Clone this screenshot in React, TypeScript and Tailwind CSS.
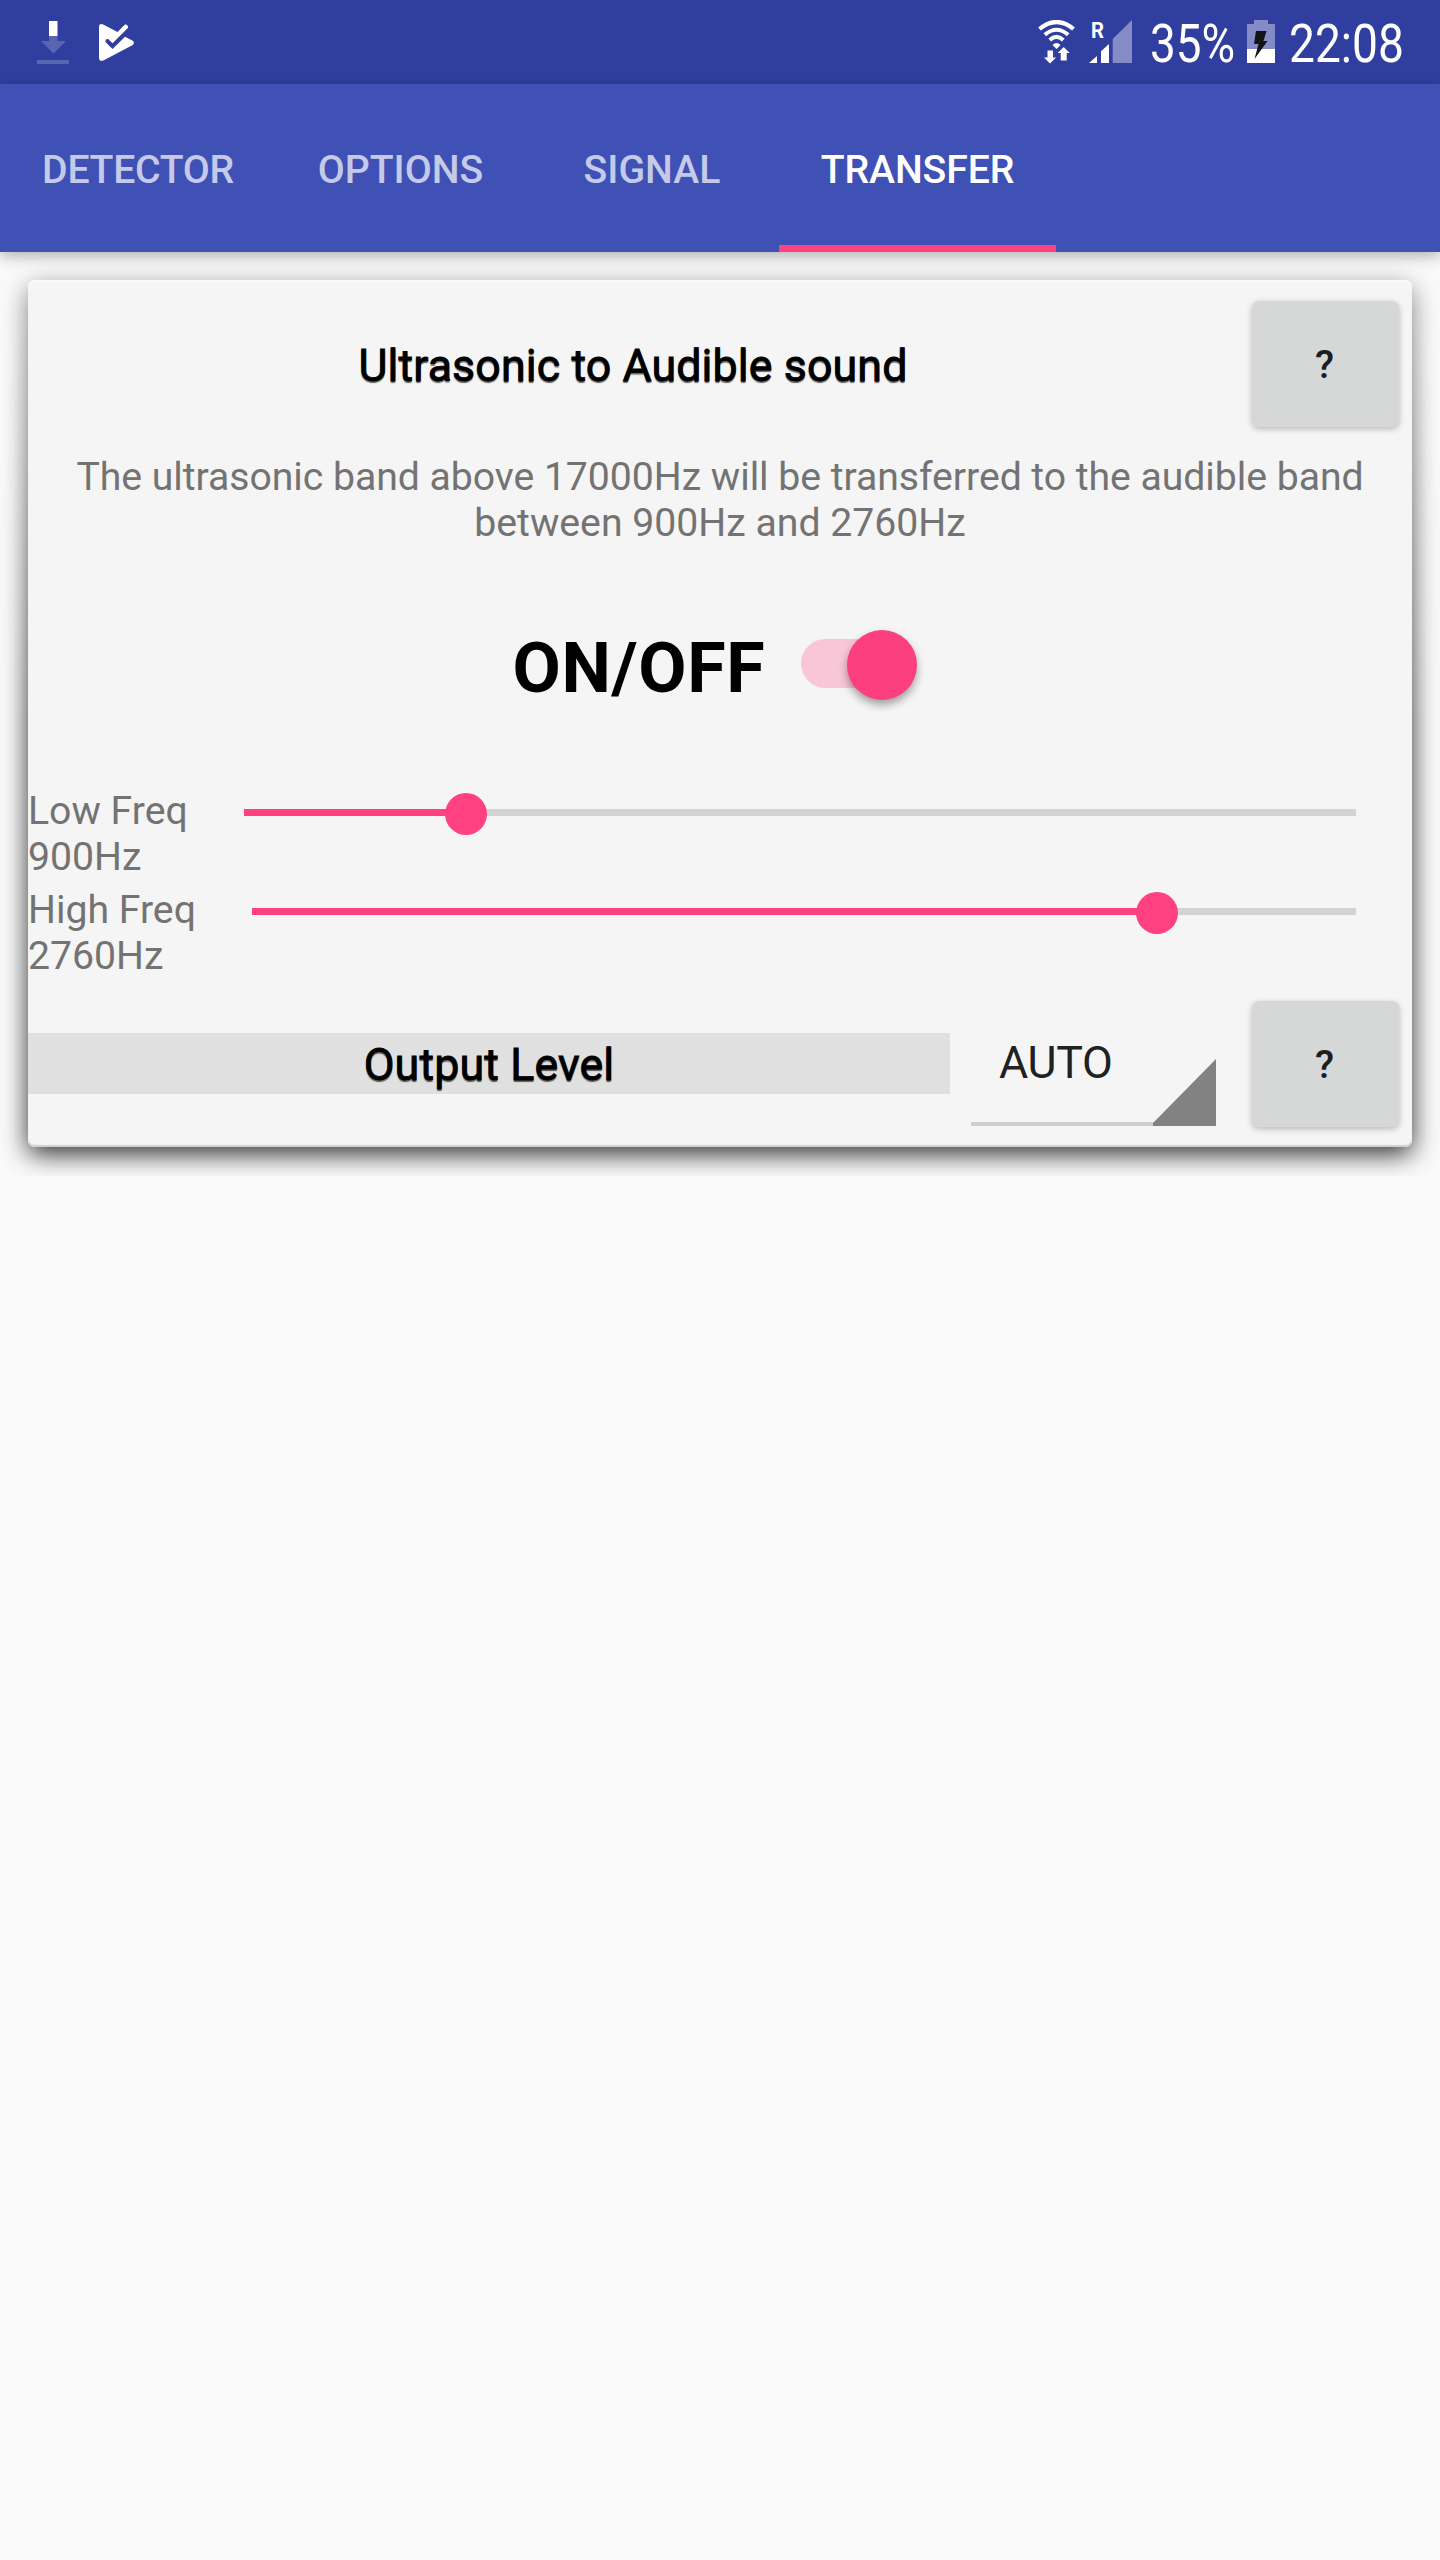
import { useState } from 'react';
import clsx from 'clsx';

const TABS = [
  { label: 'DETECTOR', width: 'w-[276px]', tracking: 'tracking-[-.3px]' },
  { label: 'OPTIONS', width: 'w-[249px]', tracking: 'tracking-normal' },
  { label: 'SIGNAL', width: 'w-[254px]', tracking: 'tracking-normal' },
  { label: 'TRANSFER', width: 'w-[277px]', tracking: 'tracking-[-.1px]' },
];

function DownloadIcon() {
  return (
    <svg width="32" height="44" viewBox="0 0 32 44" className="shrink-0">
      <path d="M12 15h8.500v5H29L16.500 32.500 4 20h8zM0 39h32v4H0z" fill="#fff" fillOpacity=".2" />
      <path d="M12 0h8.500v15H12z" fill="#fff" />
    </svg>
  );
}

function PlayCheckIcon() {
  return (
    <svg width="36" height="38" viewBox="0 0 36 38" className="shrink-0">
      <path
        d="M0 3Q0-1 4.200.400L18.500 8 25.700.800Q27.200-.200 28.500 1.400 29.700 3.100 28.400 4.400L13.500 19.300 9.200 15Q6 14.500 6.500 18L13.500 25 26 12.700 33.800 16.700Q36 18.800 33.800 21L4.400 36.500Q0 37.800 0 34z"
        fill="#fff"
      />
    </svg>
  );
}

function WifiIcon() {
  return (
    <svg width="38" height="44" viewBox="0 0 38 44" className="shrink-0" fill="none">
      <path d="M1.500 9Q18.500-5 35.500 9" stroke="#fff" strokeWidth="4.200" />
      <path d="M6.800 14.800Q18.500 4.700 30.200 14.800" stroke="#fff" strokeWidth="4" />
      <path d="M11.700 20Q18.500 13.800 25.300 20" stroke="#fff" strokeWidth="4" />
      <path d="M14.500 25Q18.500 21 22.500 25L18.500 29z" fill="#fff" />
      <path d="M9.500 30.500h5.500v7h3L12 43.500 6 37.500h3.500zM22.700 40.500v-7.500h-3L25.700 27l6 6h-3v7.500z" fill="#fff" />
    </svg>
  );
}

function SignalIcon() {
  return (
    <svg width="44" height="44" viewBox="0 0 44 44" className="shrink-0 overflow-visible">
      <text x="2" y="18" fill="#fff" className="font-['Roboto'] text-[22px] font-bold" textLength="13" lengthAdjust="spacingAndGlyphs">R</text>
      <path d="M0 43L8 36v7zM12 31.300L20 24v19h-8z" fill="#fff" />
      <path d="M23.700 19L43 0v43H23.700z" fill="#858bc6" />
    </svg>
  );
}

function BatteryIcon() {
  return (
    <svg width="28" height="43" viewBox="0 0 28 43" className="shrink-0">
      <path d="M7 0h14v4h7v25H0V4h7z" fill="#858bc6" />
      <path d="M0 29h28v14H0z" fill="#fff" />
      <path d="M9 11h10.500L16.500 21h4L7.500 39 11.500 24H7z" fill="#141414" />
    </svg>
  );
}

function StatusBar() {
  return (
    <div className="flex h-[84px] items-start bg-[#303f9f] text-[53px] leading-[62px] text-white">
      <div className="mt-[21px] ml-[37px]"><DownloadIcon /></div>
      <div className="mt-[24px] ml-[30px]"><PlayCheckIcon /></div>
      <div className="mt-[19.5px] ml-auto"><WifiIcon /></div>
      <div className="mt-[19.5px] ml-[13px]"><SignalIcon /></div>
      <div className="mt-[13px] ml-[17px] w-[99px]">
        <span className="inline-block origin-left scale-x-[.865]">35%</span>
      </div>
      <div className="mt-[20px] -ml-[2px]"><BatteryIcon /></div>
      <div className="mt-[13px] ml-[14px] w-[151px]">
        <span className="inline-block origin-left scale-x-[.87]">22:08</span>
      </div>
    </div>
  );
}

function HelpButton() {
  return (
    <button className="mr-[13px] ml-[14px] h-[126px] w-[147px] shrink-0 rounded-[7px] bg-[#d6d8d7] pt-[2px] pr-[2px] text-[39.2px] font-medium text-[#1d1e1e] shadow-[0_2px_6px_rgba(0,0,0,.25)]">
      ?
    </button>
  );
}

function FreqSlider({ label, value, percent }: { label: string; value: string; percent: number }) {
  return (
    <div className="flex h-[99px] items-start">
      <p className="leading-[46px]">{label}<br />{value}</p>
      <div className="relative mt-[21px] mr-[56px] ml-[56px] h-[7px] flex-1 bg-[#d3d3d3]">
        <div className="h-full bg-[#ff4081]" style={{ width: `${percent}%` }} />
        <div
          className="absolute -top-[16.5px] size-[42px] -translate-x-1/2 rounded-full bg-[#ff4081]"
          style={{ left: `${percent}%` }}
        />
      </div>
    </div>
  );
}

export default function App() {
  const [tab, setTab] = useState('TRANSFER');
  const [on, setOn] = useState(true);

  return (
    <div className="h-[2560px] w-[1440px] overflow-hidden bg-[#fafafa] font-['Roboto',sans-serif] text-[39.2px] text-[#737373]">
      <StatusBar />
      <nav className="relative flex h-[168px] bg-[#3f51b5] shadow-[0_4px_14px_rgba(0,0,0,.3)]">
        {TABS.map(({ label, width, tracking }) => (
          <button
            key={label}
            onClick={() => setTab(label)}
            className={clsx(
              'border-b-[7px] pt-[12px] text-center font-medium',
              width,
              tracking,
              tab === label ? 'border-b-[#ff4081] text-white' : 'border-b-transparent text-[#c5cae9]',
            )}
          >
            {label}
          </button>
        ))}
      </nav>

      <main className="relative px-[28px] pt-[28px]">
        <div className="relative">
          {/* elevation shadow, lighter towards the top */}
          <div className="absolute -inset-x-[28px] -top-[28px] -bottom-[29px] overflow-hidden mask-[linear-gradient(to_bottom,rgba(0,0,0,.55),#000_50%)]">
            <div className="absolute inset-x-[28px] top-[28px] bottom-[29px] rounded-[7px] shadow-[0_7px_26px_rgba(0,0,0,.82)]" />
          </div>
          <section className="relative h-[867px] rounded-[7px] bg-[#f5f5f5] shadow-[inset_0_2px_1px_#fafafa,inset_0_-2px_1px_#d0d0d0]">
            <div className="mb-[6px] flex h-[168px] items-center">
              <h1 className="flex-1 pt-[4px] text-center text-[44.8px] tracking-[.07px] text-black [-webkit-text-stroke:.8px_#000] text-shadow-[0_2px_1px_rgba(0,0,0,.6)]">
                Ultrasonic to Audible sound
              </h1>
              <HelpButton />
            </div>
            <p className="text-center leading-[46px]">
              <span className="tracking-[-.045px]">The ultrasonic band above 17000Hz will be transferred to the audible band</span>
              <br />
              between 900Hz and 2760Hz
            </p>
            <div className="flex h-[242px] items-center justify-center pr-[14px]">
              <span className="pt-[2px] text-[70px] font-bold tracking-[.7px] text-black">ON/OFF</span>
              <button
                role="switch"
                aria-checked={on}
                aria-label="ON/OFF"
                onClick={() => setOn(!on)}
                className="relative mb-[7px] ml-[36px] h-[49px] w-[112px] rounded-full bg-[#f9c6d8]"
              >
                <span
                  className={clsx(
                    'absolute -top-[9px] size-[70px] rounded-full bg-[#fb3f7f] shadow-[0_5px_8px_rgba(0,0,0,.35)]',
                    on ? 'left-[46px]' : '-left-[4px]',
                  )}
                />
              </button>
            </div>
            <FreqSlider label="Low Freq" value="900Hz" percent={20} />
            <FreqSlider label="High Freq" value="2760Hz" percent={82} />
            <div className="mt-[15px] flex h-[126px] items-center">
              <h2 className="mb-px h-[61px] w-[922px] bg-[#e0e0e0] text-center text-[44.8px] leading-[63px] tracking-[.1px] text-black [-webkit-text-stroke:.8px_#000] text-shadow-[0_2px_1px_rgba(0,0,0,.6)]">
                Output Level
              </h2>
              <div className="relative ml-[21px] h-[125px] w-[245px] self-start border-b-[4px] border-[#cdcdcd] pl-[28px] text-[44.8px] leading-[124px] tracking-[-.3px] text-[#212121]">
                AUTO
                <svg width="63" height="67" viewBox="0 0 63 67" className="absolute right-0 -bottom-[4px]">
                  <path d="M63 0v67H0v-3z" fill="#828282" />
                </svg>
              </div>
              <div className="flex-1" />
              <HelpButton />
            </div>
          </section>
        </div>
      </main>
    </div>
  );
}
